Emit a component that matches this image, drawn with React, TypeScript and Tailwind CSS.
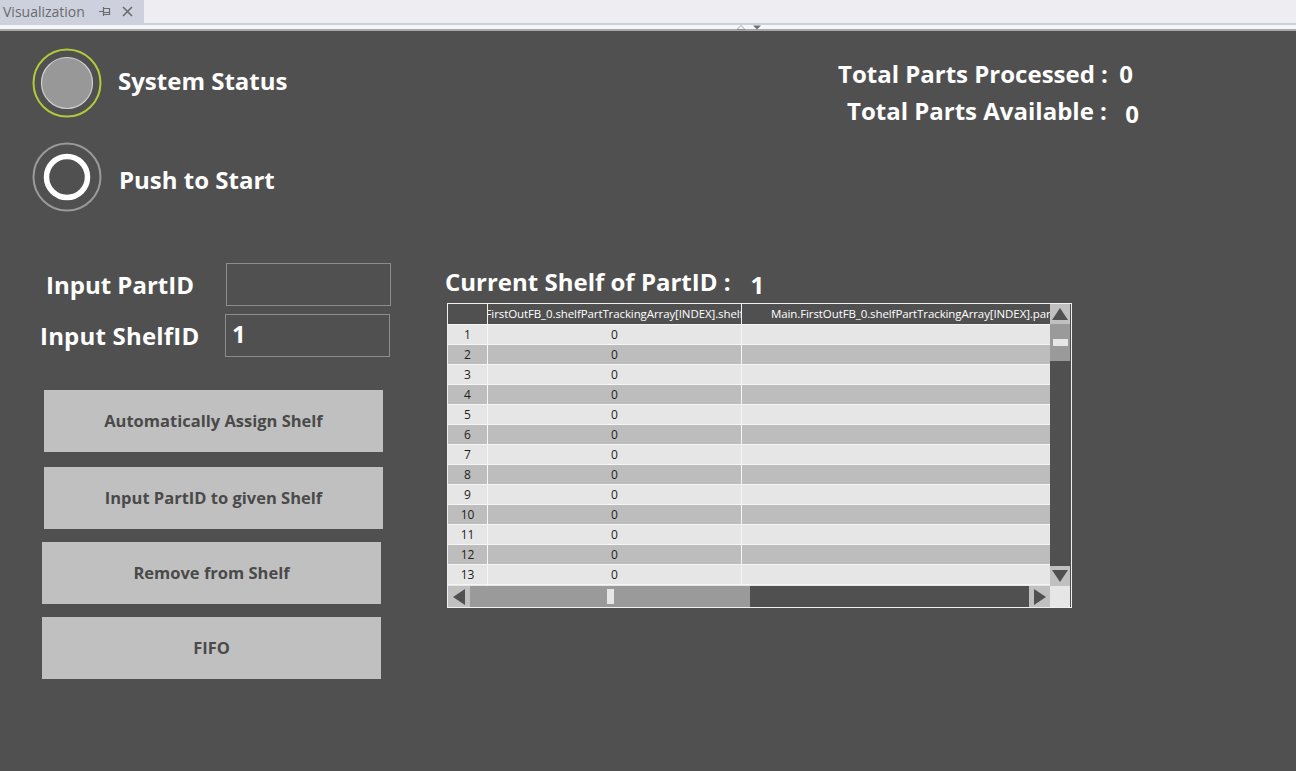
import React from 'react';

const rows = Array.from({ length: 13 }, (_, i) => i + 1);

const StatusLamp: React.FC = () => (
    <svg width="70" height="70" viewBox="0 0 70 70">
        <circle cx="35" cy="35" r="33.5" fill="none" stroke="#b4c83a" strokeWidth="2" />
        <circle cx="35" cy="35" r="25.5" fill="#989898" stroke="#cfcfcf" strokeWidth="1.2" />
    </svg>
);

const StartButton: React.FC = () => (
    <svg width="70" height="70" viewBox="0 0 70 70">
        <circle cx="35" cy="35" r="33.5" fill="none" stroke="#9a9a9a" strokeWidth="2" />
        <circle cx="35" cy="35" r="20.5" fill="none" stroke="#ffffff" strokeWidth="5.5" />
    </svg>
);

const ActionButton: React.FC<{ label: string; className?: string }> = ({ label, className }) => (
    <button
        className={
            'h-[62px] w-[339px] bg-[#c0c0c0] text-[16.5px] font-bold text-[#4a4a4a] flex items-center justify-center ' +
            (className ?? '')
        }
    >
        {label}
    </button>
);

const ShelfTable: React.FC = () => (
    <div className="w-[625px] h-[305px] border border-[#f0f0f0] bg-[#505050] flex flex-col text-[12px] font-['Segoe_UI','Open_Sans',sans-serif]">
        <div className="flex h-[282px]">
            <div className="w-[602px] flex flex-col overflow-hidden">
                <div className="flex h-[20px] bg-[#505050] text-white text-[11.5px] tracking-[-0.1px] shrink-0">
                    <div className="w-[40px] border-r border-[#f0f0f0]" />
                    <div className="w-[254px] border-r border-[#f0f0f0] flex justify-center overflow-hidden whitespace-nowrap leading-[20px]">
                        <span className="relative -left-[9px]">Main.FirstOutFB_0.shelfPartTrackingArray[INDEX].shelfID</span>
                    </div>
                    <div className="flex-1 overflow-hidden whitespace-nowrap leading-[20px] pl-[29px]">
                        Main.FirstOutFB_0.shelfPartTrackingArray[INDEX].partID
                    </div>
                </div>
                {rows.map(r => (
                    <div
                        key={r}
                        className={
                            'flex h-[20px] shrink-0 border-t border-[#f5f5f5] text-[#1e1e1e] leading-[19px] ' +
                            (r % 2 === 1 ? 'bg-[#e6e6e6]' : 'bg-[#bdbdbd]')
                        }
                    >
                        <div className="w-[40px] border-r border-[#f5f5f5] text-center">{r}</div>
                        <div className="w-[254px] border-r border-[#f5f5f5] text-center">0</div>
                        <div className="flex-1" />
                    </div>
                ))}
                <div className="flex h-[2px] shrink-0 border-t border-[#f5f5f5] bg-[#e6e6e6]">
                    <div className="w-[40px] border-r border-[#f5f5f5]" />
                </div>
            </div>
            <div className="w-[20px] flex flex-col">
                <div className="h-[20px] bg-[#c0c0c0] flex items-center justify-center">
                    <svg width="18" height="14" viewBox="0 0 18 14">
                        <polygon points="9,1 17,13 1,13" fill="#505050" />
                    </svg>
                </div>
                <div className="h-[37px] bg-[#9a9a9a] flex items-center justify-center">
                    <div className="w-[15px] h-[7px] bg-[#e6e6e6]" />
                </div>
                <div className="flex-1 bg-[#505050]" />
                <div className="h-[20px] bg-[#c0c0c0] flex items-center justify-center">
                    <svg width="18" height="14" viewBox="0 0 18 14">
                        <polygon points="1,1 17,1 9,13" fill="#505050" />
                    </svg>
                </div>
            </div>
        </div>
        <div className="flex h-[21px]">
            <div className="w-[22px] bg-[#c0c0c0] flex items-center justify-center">
                <svg width="14" height="18" viewBox="0 0 14 18">
                    <polygon points="1,9 13,1 13,17" fill="#505050" />
                </svg>
            </div>
            <div className="w-[280px] bg-[#9a9a9a] flex items-center justify-center">
                <div className="w-[7px] h-[15px] bg-[#e6e6e6]" />
            </div>
            <div className="w-[279px] bg-[#505050]" />
            <div className="w-[21px] bg-[#c0c0c0] flex items-center justify-center">
                <svg width="14" height="18" viewBox="0 0 14 18">
                    <polygon points="1,1 13,9 1,17" fill="#505050" />
                </svg>
            </div>
            <div className="w-[20px] bg-[#e6e6e6]" />
        </div>
    </div>
);

export default function App() {
    return (
        <div className="w-[1296px] h-[771px] flex flex-col bg-[#505050] overflow-hidden font-['Segoe_UI','Open_Sans',sans-serif]">
            {/* docked window tab strip */}
            <div className="h-[23px] bg-[#eeeef2] flex shrink-0">
                <div className="w-[144px] bg-[#cdd1dd] flex items-center pl-[3px] text-[14px] text-[#6b6b6b]">
                    <span>Visualization</span>
                    <svg className="ml-[14px]" width="12" height="11" viewBox="0 0 12 11">
                        <path d="M0 5.5 H4 M4.5 1 V10 M4.5 2.5 H10.5 V8.5 H4.5 M4.5 6.5 H10.5" stroke="#6b6b6b" strokeWidth="1.2" fill="none" />
                    </svg>
                    <svg className="ml-[11px]" width="11" height="11" viewBox="0 0 11 11">
                        <path d="M1 1 L10 10 M10 1 L1 10" stroke="#6b6b6b" strokeWidth="1.6" />
                    </svg>
                </div>
            </div>
            <div className="h-[2px] bg-[#ccd0dc] shrink-0" />
            <div className="h-[4px] bg-[#f7f7f9] shrink-0 relative">
                <svg className="absolute left-[736px] top-[0px]" width="10" height="5" viewBox="0 0 10 5">
                    <polygon points="1,4.5 5,0.5 9,4.5" fill="none" stroke="#888" strokeWidth="0.8" />
                </svg>
                <svg className="absolute left-[752px] top-[0px]" width="10" height="5" viewBox="0 0 10 5">
                    <polygon points="1,0.5 9,0.5 5,4.5" fill="#707070" />
                </svg>
            </div>
            <div className="h-[2px] bg-[#a8a8a8] shrink-0" />

            {/* status section */}
            <div className="flex shrink-0 pt-[17px]">
                <div className="flex flex-col gap-[24px] pl-[32px] w-[800px]">
                    <div className="flex items-center">
                        <StatusLamp />
                        <span className="ml-[16px] text-[24px] font-bold text-white relative top-[-2px]">System Status</span>
                    </div>
                    <div className="flex items-center">
                        <StartButton />
                        <span className="ml-[17px] text-[24px] font-bold text-white relative top-[3px]">Push to Start</span>
                    </div>
                </div>
                <div className="flex flex-col pt-[10px] text-[24px] font-bold text-white">
                    <div className="ml-[38px] leading-[32px]">
                        Total Parts Processed : <span className="ml-[5px]">0</span>
                    </div>
                    <div className="ml-[47px] mt-[5px] leading-[32px]">
                        Total Parts Available : <span className="ml-[12px] relative top-[3px]">0</span>
                    </div>
                </div>
            </div>

            {/* controls + table */}
            <div className="flex mt-[51px]">
                <div className="w-[446px] flex flex-col">
                    <div className="flex items-center h-[43px]">
                        <div className="w-[196px] pl-[46px] text-[24px] font-bold text-white whitespace-nowrap">Input PartID</div>
                        <div className="ml-[30px] w-[165px] h-[43px] border border-[#8c8c8c]" />
                    </div>
                    <div className="flex items-center h-[43px] mt-[8px]">
                        <div className="w-[195px] pl-[40px] text-[24px] font-bold text-white whitespace-nowrap tracking-[0.2px]">Input ShelfID</div>
                        <div className="ml-[30px] w-[165px] h-[43px] border border-[#8c8c8c] pl-[6px] text-[24px] font-bold text-white leading-[38px]">
                            1
                        </div>
                    </div>
                    <ActionButton label="Automatically Assign Shelf" className="ml-[44px] mt-[33px]" />
                    <ActionButton label="Input PartID to given Shelf" className="ml-[44px] mt-[15px]" />
                    <ActionButton label="Remove from Shelf" className="ml-[42px] mt-[13px]" />
                    <ActionButton label="FIFO" className="ml-[42px] mt-[13px]" />
                </div>
                <div className="flex flex-col pt-[2px]">
                    <div className="flex items-center h-[34px] text-[24px] font-bold text-white">
                        <span className="-ml-[1px]">Current Shelf of PartID :</span>
                        <span className="ml-[20px] relative top-[3px]">1</span>
                    </div>
                    <div className="ml-[1px] mt-[4px]">
                        <ShelfTable />
                    </div>
                </div>
            </div>
        </div>
    );
}
